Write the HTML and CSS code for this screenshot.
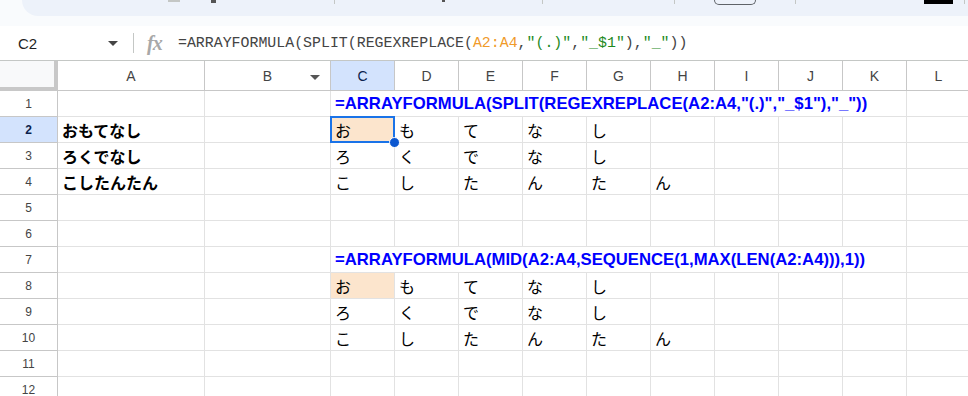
FILE: index.html
```html
<!DOCTYPE html>
<html>
<head>
    <title>Sheet</title>
    <link rel="stylesheet" href="styles.css">
</head>
<body>
    <!-- Toolbar (only its bottom edge is visible) -->
    <div class="top-strip">
        <div class="toolbar">
            <span class="tb-bit" style="margin-left:146px;width:12px;height:2px"></span>
            <span class="tb-bit dark" style="margin-left:31px;width:5px;height:3px"></span>
            <span class="tb-sep" style="margin-left:118px"></span>
            <span class="tb-bit dark" style="margin-left:107px;width:3px;height:2px"></span>
            <span class="tb-sep" style="margin-left:97px"></span>
            <span class="tb-sep" style="margin-left:131px"></span>
            <span class="tb-box" style="margin-left:39px"></span>
            <span class="tb-sep" style="margin-left:39px"></span>
            <span class="tb-black" style="margin-left:128px"></span>
            <span class="tb-sep" style="margin-left:11px"></span>
        </div>
    </div>

    <!-- Formula bar -->
    <div class="formula-bar">
        <div class="name-box">
            <span>C2</span>
            <svg width="10" height="5" viewBox="0 0 10 5"><path d="M0 0h10L5 5z" fill="#444"/></svg>
        </div>
        <div class="divider"></div>
        <div class="fx">fx</div>
        <div class="formula-input">=ARRAYFORMULA(SPLIT(REGEXREPLACE(<span class="ref">A2:A4</span>,<span class="str">"(.)"</span>,<span class="str">"_$1"</span>),<span class="str">"_"</span>))</div>
    </div>

    <!-- Grid -->
    <div class="sheet" id="sheet"></div>

    <script>
        const cols = ['A', 'B', 'C', 'D', 'E', 'F', 'G', 'H', 'I', 'J', 'K', 'L'];

        // Cell contents, by row then column
        const data = {
            1: { C: { text: '=ARRAYFORMULA(SPLIT(REGEXREPLACE(A2:A4,"(.)","_$1"),"_"))', cls: 'formula', span: 9 } },
            2: { A: 'おもてなし', C: 'お', D: 'も', E: 'て', F: 'な', G: 'し' },
            3: { A: 'ろくでなし', C: 'ろ', D: 'く', E: 'で', F: 'な', G: 'し' },
            4: { A: 'こしたんたん', C: 'こ', D: 'し', E: 'た', F: 'ん', G: 'た', H: 'ん' },
            7: { C: { text: '=ARRAYFORMULA(MID(A2:A4,SEQUENCE(1,MAX(LEN(A2:A4))),1))', cls: 'formula', span: 9 } },
            8: { C: 'お', D: 'も', E: 'て', F: 'な', G: 'し' },
            9: { C: 'ろ', D: 'く', E: 'で', F: 'な', G: 'し' },
            10: { C: 'こ', D: 'し', E: 'た', F: 'ん', G: 'た', H: 'ん' }
        };

        const sheet = document.getElementById('sheet');

        function cell(cls, text) {
            const div = document.createElement('div');
            div.className = cls;
            if (text) div.textContent = text;
            sheet.appendChild(div);
            return div;
        }

        // Header row
        cell('corner');
        cols.forEach(c => {
            const h = cell('col-head' + (c === 'C' ? ' active' : ''), c);
            if (c === 'B') h.innerHTML = 'B<span class="col-menu"></span>';
        });

        // Body rows
        for (let r = 1; r <= 12; r++) {
            cell('row-head' + (r === 2 ? ' active' : ''), String(r));
            const row = data[r] || {};
            let skip = 0;
            cols.forEach(c => {
                if (skip > 0) { skip--; return; }
                let v = row[c];
                let cls = 'cell';
                if (c === 'A') cls += ' name';
                if (v && typeof v === 'object') {
                    cls += ' ' + v.cls;
                    skip = v.span - 1;
                }
                if ((r === 2 || r === 8) && c === 'C') cls += ' peach';
                const el = cell(cls, v && typeof v === 'object' ? v.text : v);
                if (v && v.span) el.style.gridColumn = 'span ' + v.span;
                if (r === 2 && c === 'C') el.classList.add('selected');
            });
        }
    </script>
</body>
</html>
```

FILE: styles.css
```css
body {
    margin: 0;
    width: 968px;
    height: 396px;
    overflow: hidden;
    background: #fff;
    font-family: Arial, "Liberation Sans", "Noto Sans CJK JP", sans-serif;
}

.top-strip {
    height: 26px;
    background: #f9fbfd;
}
.toolbar {
    height: 16px;
    margin-left: 22px;
    background: #edf2fa;
    border-bottom-left-radius: 18px;
    display: flex;
    align-items: flex-start;
}
.tb-bit { display: block; background: #c4c7c5; flex: none; }
.tb-bit.dark { background: #555; }
.tb-sep { display: block; width: 1px; height: 4px; background: #c4c7c5; flex: none; }
.tb-box {
    display: block;
    width: 42px;
    height: 5px;
    box-sizing: border-box;
    border: 1px solid #5f6368;
    border-top: none;
    border-radius: 0 0 5px 5px;
    flex: none;
}
.tb-black { display: block; width: 29px; height: 4px; background: #000; flex: none; }

.formula-bar {
    height: 35px;
    display: flex;
    align-items: center;
    border-bottom: 1px solid #c4c7c5;
    box-sizing: border-box;
    color: #444;
}
.name-box {
    width: 118px;
    padding-left: 18px;
    box-sizing: border-box;
    display: flex;
    align-items: center;
    justify-content: space-between;
    font-size: 15px;
    color: #1f1f1f;
}
.divider {
    width: 1px;
    height: 20px;
    background: #c4c7c5;
    margin-left: 15px;
}
.fx {
    margin-left: 13px;
    width: 31px;
    font-family: "Liberation Serif", serif;
    font-style: italic;
    font-weight: bold;
    font-size: 20px;
    color: #a8a8a8;
    letter-spacing: -1px;
}
.formula-input {
    font-family: "Liberation Mono", monospace;
    font-size: 14.9px;
    color: #444;
    white-space: nowrap;
}
.formula-input .ref { color: #f09a2a; }
.formula-input .str { color: #1e8a1e; }

.sheet {
    display: grid;
    grid-template-columns: 58px 147px 126px repeat(10, 64px);
    grid-template-rows: 30px;
    grid-auto-rows: 26px;
}

.corner {
    background: #f8f9fa;
    border-right: 4px solid #c8c8c8;
    border-bottom: 4px solid #c8c8c8;
    box-sizing: border-box;
}
.col-head {
    position: relative;
    display: flex;
    align-items: center;
    justify-content: center;
    font-size: 14px;
    color: #444;
    border-right: 1px solid #c7c7c7;
    border-bottom: 1px solid #c7c7c7;
    box-sizing: border-box;
}
.col-head.active { background: #d3e3fd; color: #0b1f4d; }
.col-menu {
    position: absolute;
    right: 10px;
    top: 14px;
    border-left: 5px solid transparent;
    border-right: 5px solid transparent;
    border-top: 5px solid #555;
}
.row-head {
    display: flex;
    align-items: center;
    justify-content: center;
    font-size: 12px;
    color: #444;
    border-right: 1px solid #c7c7c7;
    border-bottom: 1px solid #c7c7c7;
    box-sizing: border-box;
}
.row-head.active { background: #d3e3fd; color: #0b1f4d; font-weight: bold; }

.cell {
    position: relative;
    display: flex;
    align-items: center;
    padding-left: 4px;
    font-family: "Noto Sans CJK JP", sans-serif;
    font-size: 16px;
    color: #000;
    border-right: 1px solid #e2e2e2;
    border-bottom: 1px solid #e2e2e2;
    box-sizing: border-box;
    white-space: nowrap;
}
.cell.name { font-weight: bold; }
.cell.formula {
    font-family: Arial, "Liberation Sans", sans-serif;
    font-weight: bold;
    font-size: 16.7px;
    color: #0000ff;
}
.cell.peach { background: #fce5cd; }
.cell.selected::after {
    content: "";
    position: absolute;
    left: -1px;
    top: -1px;
    right: -1px;
    bottom: -1px;
    border: 2px solid #1a73e8;
}
.cell.selected::before {
    content: "";
    position: absolute;
    right: -6px;
    bottom: -6px;
    width: 9px;
    height: 9px;
    border-radius: 50%;
    background: #0b57d0;
    border: 1px solid #fff;
    z-index: 2;
}
```
